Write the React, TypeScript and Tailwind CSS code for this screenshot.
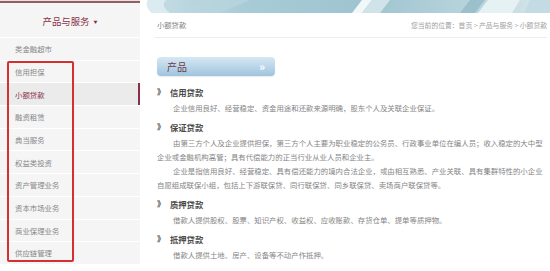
import React from "react";

const FONT = { fontFamily: '"Noto Sans CJK SC", "Noto Sans", sans-serif' };

const items = [
  "类金融超市",
  "信用担保",
  "小额贷款",
  "融资租赁",
  "典当服务",
  "权益类投资",
  "资产管理业务",
  "资本市场业务",
  "商业保理业务",
  "供应链管理",
];

function Banner() {
  return (
    <svg width="412" height="13" viewBox="0 0 412 13" className="block">
      <defs>
        <linearGradient id="bg" x1="0" y1="0" x2="1" y2="0">
          <stop offset="0" stopColor="#c9dfe6" />
          <stop offset="0.25" stopColor="#a8ccd6" />
          <stop offset="0.55" stopColor="#9fc4cf" />
          <stop offset="0.8" stopColor="#b7d4dc" />
          <stop offset="1" stopColor="#d8e8ec" />
        </linearGradient>
      </defs>
      <rect x="0" y="0" width="412" height="13" fill="url(#bg)" />
      <path d="M0 0 L8 0 Q4 6 12 13 L0 13 Z" fill="#ffffff" />
      <path d="M8 0 Q4 6 12 13 L30 13 Q20 6 26 0 Z" fill="#dcebef" />
      <path d="M60 0 L110 0 L80 13 L40 13 Z" fill="#b9d6de" opacity="0.7" />
      <path d="M222 0 L232 0 L222 13 L212 13 Z" fill="#f2f8fa" />
      <path d="M232 0 L250 0 L240 13 L222 13 Z" fill="#cfe3e9" />
      <path d="M330 0 L345 0 L335 13 L320 13 Z" fill="#88b3c0" opacity="0.6" />
      <path d="M348 0 L380 0 L372 13 L338 13 Z" fill="#e6f1f4" />
      <path d="M390 0 L412 0 L412 13 L384 13 Z" fill="#c3dbe2" />
    </svg>
  );
}

function Section({ title, children }: { title: string; children: React.ReactNode }) {
  return (
    <div className="mb-[3px]">
      <div className="flex items-center h-[18px] text-[8.3px] font-bold text-[#4a4a4a]">
        <span className="w-[13px] text-[8px] leading-none">》</span>
        <span>{title}</span>
      </div>
      <div className="text-[7.4px] leading-[14px] text-[#858585]">{children}</div>
    </div>
  );
}

export default function App() {
  return (
    <div className="relative w-[550px] h-[271px] bg-white overflow-hidden" style={FONT}>
      <div className="flex">
        {/* Sidebar */}
        <div className="w-[140px] shrink-0 flex flex-col">
          <div className="h-[1px] bg-[#f1dede]" />
          <div className="h-[2px] bg-[#8c6262]" />
          <div className="bg-[#f5f5f5] flex flex-col">
            <div className="h-[34px] flex items-center justify-center pt-[3px] text-[9.4px] text-[#8a2f45]">
              <span>产品与服务</span>
              <span className="ml-[4px] text-[4px]">▼</span>
            </div>
            {items.map((it) => {
              const active = it === "小额贷款";
              return (
                <div
                  key={it}
                  className={`relative h-[22.7px] border-t border-white flex items-center pl-[15px] text-[7.4px] ${
                    active ? "bg-[#ebebeb] text-[#8a2f45]" : "text-[#888888]"
                  }`}
                >
                  {it}
                  {active && (
                    <div className="absolute right-0 top-0 bottom-0 w-[2px] bg-[#8a2f45]" />
                  )}
                </div>
              );
            })}
          </div>
        </div>

        {/* Right content */}
        <div className="flex-1 flex flex-col">
          <Banner />
          <div className="pl-[15px] pr-[5px]">
            <div className="h-[25px] border-b border-[#ececec] flex items-center justify-between pl-[2px]">
              <span className="text-[7.3px] text-[#808080]">小额贷款</span>
              <span className="text-[6.8px] text-[#a0a0a0]">您当前的位置：首页 &gt; 产品与服务 &gt; 小额贷款</span>
            </div>
            <div className="pl-[2px]">
              <div className="mt-[19px] w-[118px] h-[19px] rounded-[4px] bg-gradient-to-b from-[#d6e8f4] to-[#9fc4de] flex items-center justify-between px-[10px] shadow-[0_1px_1px_rgba(0,0,0,0.08)]">
                <span className="text-[10px] text-[#6d3b48]">产品</span>
                <span className="text-[11px] font-bold text-white leading-none">»</span>
              </div>
              <div className="mt-[7px] w-[388px]">
                <Section title="信用贷款">
                  <p className="indent-[16px]">企业信用良好、经营稳定、资金用途和还款来源明确，股东个人及关联企业保证。</p>
                </Section>
                <Section title="保证贷款">
                  <p className="indent-[16px]">
                    由第三方个人及企业提供担保，第三方个人主要为职业稳定的公务员、行政事业单位在编人员；收入稳定的大中型企业或金融机构高管；具有代偿能力的正当行业从业人员和企业主。
                  </p>
                  <p className="indent-[16px]">
                    企业是指信用良好、经营稳定、具有偿还能力的境内合法企业，或由相互熟悉、产业关联、具有集群特性的小企业自愿组成联保小组，包括上下游联保贷、同行联保贷、同乡联保贷、卖场商户联保贷等。
                  </p>
                </Section>
                <Section title="质押贷款">
                  <p className="indent-[16px]">借款人提供股权、股票、知识产权、收益权、应收账款、存货仓单、提单等质押物。</p>
                </Section>
                <Section title="抵押贷款">
                  <p className="indent-[16px]">借款人提供土地、房产、设备等不动产作抵押。</p>
                </Section>
              </div>
            </div>
          </div>
        </div>
      </div>

      {/* Red annotation rectangle */}
      <div className="absolute left-[7px] top-[61px] w-[67px] h-[201px] border-2 border-[#d3302f] rounded-[2px]" />
    </div>
  );
}
